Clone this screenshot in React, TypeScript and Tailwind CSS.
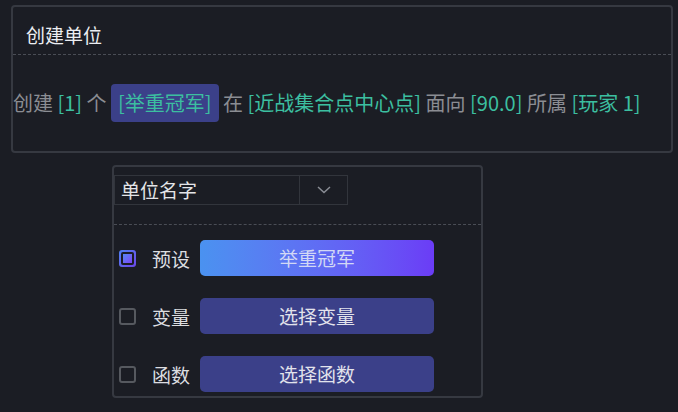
import React from 'react';

const font = { fontFamily: '"Noto Sans CJK SC", "Noto Sans", sans-serif' };

function Plain({ children }: { children: React.ReactNode }) {
  return <span className="text-[#8b8d93]">{children}</span>;
}

function Param({ children }: { children: React.ReactNode }) {
  return <span className="text-[#3cbfa0]">{children}</span>;
}

function Check({ checked }: { checked?: boolean }) {
  if (checked) {
    return (
      <div className="w-[17px] h-[17px] rounded-[3px] p-[2px] bg-gradient-to-br from-[#4d7ff0] to-[#6a45e8] shrink-0">
        <div className="w-full h-full rounded-[2px] bg-[#1b1d24] p-[2px]">
          <div className="w-full h-full bg-gradient-to-br from-[#4f86f2] to-[#7a40f5]" />
        </div>
      </div>
    );
  }
  return <div className="w-[17px] h-[17px] rounded-[3px] border-2 border-[#56595f] shrink-0" />;
}

function Row({ label, button, checked, primary }: { label: string; button: string; checked?: boolean; primary?: boolean }) {
  return (
    <div className="flex items-center h-9">
      <div className="ml-[5px]">
        <Check checked={checked} />
      </div>
      <span className="ml-[16px] w-[40px] text-[19px] leading-none text-[#dcdde0]">{label}</span>
      <button
        className={`ml-[8px] w-[234px] h-9 rounded-[5px] text-[19px] ${
          primary
            ? 'bg-gradient-to-r from-[#4a92f0] to-[#6b3cf6] text-[#d2d8f5]'
            : 'bg-[#3b4089] text-[#e2e3ec]'
        }`}
      >
        {button}
      </button>
    </div>
  );
}

export default function App() {
  return (
    <div className="w-[678px] h-[412px] bg-[#1b1d24] overflow-hidden pt-[5px]" style={font}>
      {/* Statement card */}
      <div className="ml-[11px] w-[662px] h-[148px] rounded-[4px] border-2 border-[#363941] flex flex-col">
        <div className="h-[47px] flex items-center pt-[10px] pl-[13px] text-[19px] text-[#eceef2]">创建单位</div>
        <div className="border-t border-dashed border-[#4a4d55]" />
        <div className="flex-1 flex items-center text-[20px] whitespace-pre leading-none">
          <Plain>创建 </Plain>
          <Param>[1]</Param>
          <Plain> 个 </Plain>
          <span className="h-[38px] px-[7px] flex items-center rounded-[4px] bg-[#3b4089]">
            <Param>[举重冠军]</Param>
          </span>
          <Plain> 在 </Plain>
          <Param>[近战集合点中心点]</Param>
          <Plain> 面向 </Plain>
          <Param>[90.0]</Param>
          <Plain> 所属 </Plain>
          <Param>[玩家 1]</Param>
        </div>
      </div>

      {/* Parameter editor */}
      <div className="mt-[12px] ml-[112px] w-[371px] h-[233px] rounded-[4px] border-2 border-[#363941] flex flex-col">
        <div className="mt-[8px] flex h-[30px] w-[234px] border border-[#32353c]">
          <div className="flex-1 flex items-center pl-[6px] text-[19px] text-[#e4e5e8] border-r border-[#32353c]">单位名字</div>
          <div className="w-[47px] flex items-center justify-center">
            <svg width="14" height="8" viewBox="0 0 14 8" fill="none">
              <path d="M1 1l6 5.5L13 1" stroke="#8a8d95" strokeWidth="1.5" />
            </svg>
          </div>
        </div>
        <div className="mt-[19px] border-t border-dashed border-[#4a4d55]" />
        <div className="pt-[15px] flex flex-col gap-[22px]">
          <Row label="预设" button="举重冠军" checked primary />
          <Row label="变量" button="选择变量" />
          <Row label="函数" button="选择函数" />
        </div>
      </div>
    </div>
  );
}
